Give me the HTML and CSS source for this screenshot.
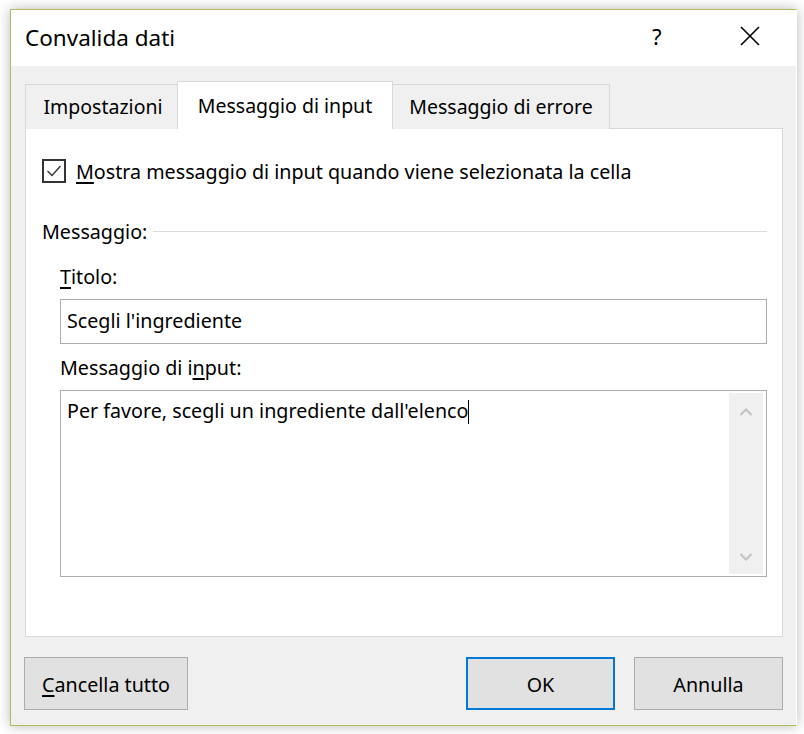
FILE: index.html
```html
<!DOCTYPE html>
<html lang="it">
<head>
<meta charset="utf-8">
<title>Convalida dati</title>
<link rel="stylesheet" href="styles.css">
</head>
<body>
<div class="dialog">
  <div class="titlebar">
    <span class="title">Convalida dati</span>
    <span class="help">?</span>
    <span class="close">
      <svg width="20" height="20" viewBox="0 0 20 20"><path d="M1 1 L19 19 M19 1 L1 19" stroke="#000" stroke-width="1.6" fill="none"/></svg>
    </span>
  </div>
  <div class="body">
    <div class="tabs">
      <div class="tab">Impostazioni</div>
      <div class="tab active">Messaggio di input</div>
      <div class="tab">Messaggio di errore</div>
    </div>
    <div class="panel">
      <div class="check-row">
        <span class="checkbox">
          <svg width="20" height="20" viewBox="0 0 20 20"><path d="M3.5 10 L8 14.5 L16.5 5" stroke="#333" stroke-width="1.4" fill="none"/></svg>
        </span>
        <span class="check-label"><u>M</u>ostra messaggio di input quando viene selezionata la cella</span>
      </div>
      <div class="group-head">
        <span class="group-label">Messaggio:</span>
        <span class="group-line"></span>
      </div>
      <div class="field-label"><u>T</u>itolo:</div>
      <div class="textbox">Scegli l'ingrediente</div>
      <div class="field-label">Messaggio di i<u>n</u>put:</div>
      <div class="textarea">
        <div class="ta-text">Per favore, scegli un ingrediente dall'elenco<span class="caret"></span></div>
        <div class="scrollbar">
          <svg width="14" height="10" viewBox="0 0 14 10"><path d="M1.5 8 L7 2.5 L12.5 8" stroke="#c2c2c2" stroke-width="2" fill="none"/></svg>
          <svg width="14" height="10" viewBox="0 0 14 10"><path d="M1.5 2 L7 7.5 L12.5 2" stroke="#c2c2c2" stroke-width="2" fill="none"/></svg>
        </div>
      </div>
    </div>
    <div class="buttons">
      <button class="btn btn-clear"><u>C</u>ancella tutto</button>
      <span class="spacer"></span>
      <button class="btn btn-ok">OK</button>
      <button class="btn btn-cancel">Annulla</button>
    </div>
  </div>
</div>
</body>
</html>
```
FILE: styles.css
```css
html, body {
  margin: 0;
  padding: 0;
  background: #ffffff;
}
body {
  width: 804px;
  height: 734px;
  overflow: hidden;
  font-family: "Noto Sans", "Open Sans", sans-serif;
  color: #000;
}
.dialog {
  margin: 9px 0 0 10px;
  width: 785px;
  height: 715px;
  border-top: 1px solid #b4b95a;
  border-left: 1px solid #b4b95a;
  border-bottom: 1px solid #b4b95a;
  border-right: 1px solid #ffffff;
  box-shadow: 0 0 12px rgba(0, 0, 0, 0.28);
  display: flex;
  flex-direction: column;
  background: #f0f0f0;
}
.titlebar {
  height: 56px;
  background: #ffffff;
  display: flex;
  align-items: center;
  padding-left: 14px;
}
.title {
  font-size: 22.5px;
  flex: 1;
  padding-bottom: 2px;
}
.help {
  font-size: 22px;
  width: 20px;
  margin-right: 68px;
  padding-bottom: 4px;
}
.close {
  width: 20px;
  height: 20px;
  margin-right: 36px;
  margin-bottom: 4px;
}
.close svg { display: block; }
.body {
  flex: 1;
  padding: 15px 13px 0 14px;
  display: flex;
  flex-direction: column;
}
.tabs {
  display: flex;
  align-items: flex-end;
  height: 48px;
  position: relative;
  z-index: 1;
  margin-bottom: -1px;
}
.tab {
  height: 45px;
  box-sizing: border-box;
  border: 1px solid #d9d9d9;
  border-bottom: none;
  background: #f0f0f0;
  font-size: 19.5px;
  display: flex;
  align-items: center;
  justify-content: center;
  padding-bottom: 1px;
}
.tab:nth-child(1) { width: 152px; border-right: none; padding-left: 3px; }
.tab:nth-child(2) { width: 216px; }
.tab:nth-child(3) { width: 217px; border-left: none; }
.tab.active {
  height: 48px;
  background: #ffffff;
  border-color: #d9d9d9;
  padding-bottom: 1px;
}
.panel {
  height: 509px;
  box-sizing: border-box;
  background: #ffffff;
  border: 1px solid #d9d9d9;
  padding: 29px 15px 0 16px;
}
.check-row {
  display: flex;
  align-items: center;
  height: 26px;
}
.checkbox {
  width: 20px;
  height: 20px;
  border: 2px solid #333333;
  margin-right: 10px;
  display: block;
}
.checkbox svg { display: block; }
.check-label {
  font-size: 19.7px;
}
u {
  text-decoration: underline;
  text-underline-offset: 3px;
  text-decoration-thickness: 2px;
}
.group-head {
  display: flex;
  align-items: center;
  margin-top: 34px;
  height: 26px;
}
.group-label {
  font-size: 19.7px;
  padding-right: 6px;
}
.group-line {
  flex: 1;
  height: 1px;
  background: #dcdcdc;
  margin-top: 0;
}
.field-label {
  font-size: 19.7px;
  margin-left: 18px;
  height: 26px;
  line-height: 26px;
}
.group-head + .field-label { margin-top: 20px; }
.textbox {
  margin: 9px 0 0 18px;
  height: 45px;
  box-sizing: border-box;
  border: 1px solid #adadad;
  font-size: 19.7px;
  display: flex;
  align-items: center;
  padding-left: 6px;
  padding-bottom: 2px;
}
.textbox + .field-label { margin-top: 11px; }
.textarea {
  margin: 9px 0 0 18px;
  height: 187px;
  box-sizing: border-box;
  border: 1px solid #adadad;
  display: flex;
  padding: 2px 3px 2px 6px;
}
.ta-text {
  flex: 1;
  font-size: 19.7px;
  padding-top: 5px;
  line-height: 26px;
}
.caret {
  display: inline-block;
  width: 1px;
  height: 24px;
  background: #000;
  vertical-align: -6px;
}
.scrollbar {
  width: 34px;
  background: #f0f0f0;
  display: flex;
  flex-direction: column;
  justify-content: space-between;
  align-items: center;
  padding: 14px 0 12px;
}
.scrollbar svg { display: block; }
.buttons {
  display: flex;
  margin-top: 20px;
  margin-left: -1px;
}
.spacer { flex: 1; }
.btn {
  height: 53px;
  box-sizing: border-box;
  background: #e1e1e1;
  border: 1px solid #adadad;
  font-family: "Noto Sans", "Open Sans", sans-serif;
  font-size: 19.7px;
  color: #000;
  padding: 2px 0 0;
  margin: 0;
}
.btn-clear { width: 164px; }
.btn-ok {
  width: 149px;
  border: 2px solid #0078d7;
  margin-right: 19px;
}
.btn-cancel { width: 149px; }
```
